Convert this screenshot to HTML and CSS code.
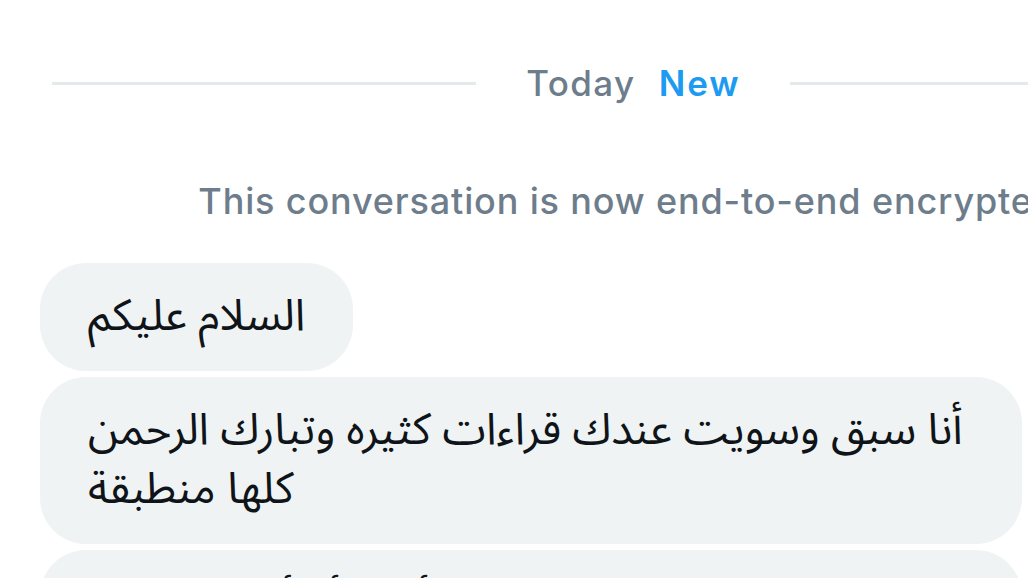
FILE: index.html
```html
<!DOCTYPE html>
<html lang="en">
<head>
<meta charset="utf-8">
<title>Messages</title>
<link rel="stylesheet" href="styles.css">
</head>
<body>
<div class="page">
  <div class="divider">
    <span class="line"></span>
    <span class="label">Today</span>
    <span class="new">New</span>
    <span class="line"></span>
  </div>
  <p class="notice">This conversation is now end-to-end encrypted.</p>
  <div class="thread">
    <div class="bubble"><span class="msg" lang="ar">السلام عليكم</span></div>
    <div class="bubble wide"><span class="msg" lang="ar">أنا سبق وسويت عندك قراءات كثيره وتبارك الرحمن كلها منطبقة</span></div>
    <div class="bubble wide"><span class="msg" lang="ar">وأبغى أسألك عن شي</span></div>
  </div>
</div>
</body>
</html>
```
FILE: styles.css
```css
html, body {
  margin: 0;
  padding: 0;
  background: #ffffff;
  overflow: hidden;
}
.page {
  width: 1266px;
  font-family: Inter, Roboto, "DejaVu Sans", sans-serif;
}
.divider {
  display: flex;
  align-items: center;
  padding: 0 52px;
  margin-top: 60px;
  height: 46px;
}
.line {
  flex: 1;
  height: 3px;
  background: #e4e9ec;
}
.label {
  margin-left: 50px;
  font-size: 35px;
  font-weight: 500;
  letter-spacing: 1.4px;
  color: #6e7d8b;
}
.new {
  margin-left: 23px;
  margin-right: 49px;
  font-size: 35px;
  font-weight: 600;
  letter-spacing: 2px;
  color: #1d9bf0;
}
.notice {
  margin: 73px 0 0;
  text-align: center;
  font-size: 36px;
  font-weight: 500;
  letter-spacing: 0.85px;
  line-height: 44px;
  color: #6e7d8b;
  white-space: nowrap;
}
.thread {
  display: flex;
  flex-direction: column;
  align-items: flex-start;
  gap: 6px;
  margin-top: 40px;
  padding-left: 40px;
}
.bubble {
  background: #eff3f4;
  border-radius: 46px;
  padding: 24px 48px 25px;
  max-width: 982px;
  box-sizing: border-box;
}
.bubble.wide {
  width: 982px;
}
.msg {
  font-family: "Noto Sans Arabic", "Noto Sans", "DejaVu Sans", sans-serif;
  font-size: 44px;
  line-height: 59px;
  color: #0f1419;
}
```
